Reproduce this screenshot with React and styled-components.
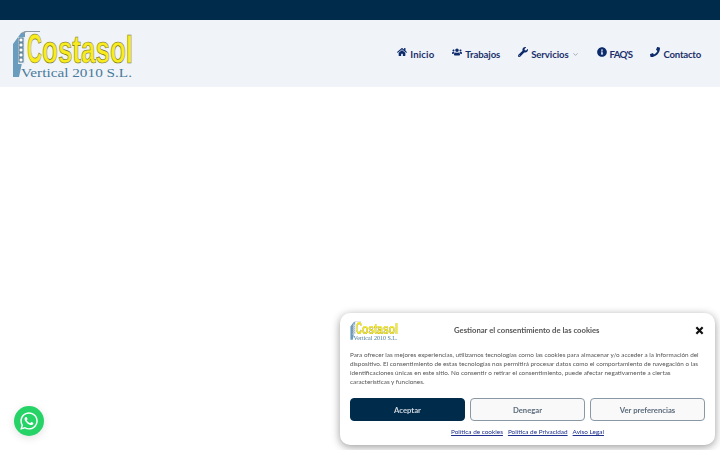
import React from "react"
import styled, { createGlobalStyle } from "styled-components"
import { FaHome, FaUsers, FaWrench, FaInfoCircle, FaPhone, FaWhatsapp } from "react-icons/fa"
import { FiChevronDown } from "react-icons/fi"

const GlobalStyle = createGlobalStyle`
  html, body {
    margin: 0;
    padding: 0;
    background: #fff;
    font-family: "Lato", "Noto Sans", sans-serif;
  }
`

const Page = styled.div`
  height: 450px;
  overflow: hidden;
`

const TopBar = styled.div`
  height: 20px;
  background-color: #002b4a;
`

const Header = styled.header`
  height: 67px;
  background-color: #f0f4f8;
  display: flex;
  align-items: center;
  justify-content: space-between;
  padding: 0 19px 0 12px;
`

const Nav = styled.nav`
  display: flex;
  align-items: center;
  gap: 18px;
`

const NavItem = styled.a`
  display: flex;
  align-items: center;
  gap: 3px;
  font-size: 9.6px;
  font-weight: 700;
  letter-spacing: ${({ $spacing }) => $spacing}px;
  color: #1b2f6b;
  padding-top: 1px;
  white-space: nowrap;

  svg.icon {
    width: 10px;
    height: 10px;
    color: #0d2b6b;
    position: relative;
    top: -2px;
  }
`

const Caret = styled(FiChevronDown)`
  width: 7px;
  height: 7px;
  color: #6f7a8e;
`

const Logo = ({ width }) => (
  <svg width={width} viewBox="0 0 121 48" style={{ display: "block" }}>
    <path d="M1 47V14L9 3H13V33H10L7 47Z" fill="#6a9cbd" />
    <path d="M9 3 13 1H28V2H14L12 4Z" fill="#8b9aa5" />
    <rect x="6" y="7" width="7" height="27" fill="#e6eef3" />
    {[8, 13, 18, 23, 28].map((y) => (
      <rect key={y} x="7" y={y} width="4" height="4" fill="#fff" stroke="#33617f" strokeWidth="0.9" />
    ))}
    <text
      x="15"
      y="33"
      fontFamily="Liberation Sans, sans-serif"
      fontWeight="700"
      fill="#f8ec1e"
      stroke="#6f6a22"
      strokeWidth="0.6"
    >
      <tspan fontSize="43" textLength="15" lengthAdjust="spacingAndGlyphs">C</tspan>
      <tspan fontSize="39" textLength="91" lengthAdjust="spacingAndGlyphs">ostasol</tspan>
    </text>
    <text
      x="9"
      y="47"
      textLength="111"
      lengthAdjust="spacingAndGlyphs"
      fontFamily="Liberation Serif, serif"
      fontSize="13.5"
      fill="#4a7a9c"
    >
      Vertical 2010 S.L.
    </text>
  </svg>
)

const Card = styled.section`
  position: fixed;
  right: 5px;
  bottom: 5px;
  width: 375px;
  height: 132px;
  box-sizing: border-box;
  background: #fff;
  border-radius: 10px;
  box-shadow: 0 2px 8px rgba(0, 0, 0, 0.4);
  padding: 7px 10px 0;
  display: flex;
  flex-direction: column;
`

const CardHead = styled.div`
  display: grid;
  grid-template-columns: 104px 1fr 24px;
  align-items: center;
  height: 22px;
`

const CardTitle = styled.div`
  font-size: 7.7px;
  font-weight: 700;
  color: #555;
  white-space: nowrap;
  margin-bottom: 3px;
`

const Close = styled.svg`
  width: 9px;
  height: 9px;
  justify-self: end;
  margin: 0 1px 2px 0;
`

const Message = styled.p`
  margin: 8px 0 0;
  font-size: 6.35px;
  line-height: 9px;
  color: #555;
  white-space: nowrap;
`

const Buttons = styled.div`
  display: grid;
  grid-template-columns: repeat(3, 115px);
  column-gap: 5px;
  margin-top: 12px;
`

const Btn = styled.button`
  height: 23px;
  padding: 0;
  border-radius: 4px;
  font-family: inherit;
  font-size: 7.7px;
  font-weight: 700;
  color: ${({ $primary }) => ($primary ? "#cfd8e0" : "#5b6b7c")};
  background: ${({ $primary }) => ($primary ? "#002b4a" : "#f9f9f9")};
  border: 1px solid ${({ $primary }) => ($primary ? "#002b4a" : "#8a98a6")};
`

const Links = styled.div`
  display: flex;
  justify-content: center;
  gap: 5px;
  margin-top: 7px;
`

const DocLink = styled.a`
  font-size: 6.4px;
  color: #1b2f8b;
  text-decoration: underline;
`

const WhatsApp = styled.a`
  position: fixed;
  left: 14px;
  bottom: 14px;
  width: 30px;
  height: 30px;
  border-radius: 50%;
  background: #25d366;
  color: #fff;
  display: flex;
  align-items: center;
  justify-content: center;
  box-shadow: 0 2px 8px rgba(0, 0, 0, 0.12);
`

const lines = [
  "Para ofrecer las mejores experiencias, utilizamos tecnologías como las cookies para almacenar y/o acceder a la información del",
  "dispositivo. El consentimiento de estas tecnologías nos permitirá procesar datos como el comportamiento de navegación o las",
  "identificaciones únicas en este sitio. No consentir o retirar el consentimiento, puede afectar negativamente a ciertas",
  "características y funciones.",
]

const App = () => (
  <Page>
    <GlobalStyle />
    <TopBar />
    <Header>
      <Logo width={121} />
      <Nav>
        <NavItem $spacing={0.15}><FaHome className="icon" /> Inicio</NavItem>
        <NavItem $spacing={-0.1}><FaUsers className="icon" /> Trabajos</NavItem>
        <NavItem $spacing={-0.1}><FaWrench className="icon" /> Servicios<Caret /></NavItem>
        <NavItem $spacing={-0.7}><FaInfoCircle className="icon" /> FAQ'S</NavItem>
        <NavItem $spacing={-0.2}><FaPhone className="icon" /> Contacto</NavItem>
      </Nav>
    </Header>
    <Card>
      <CardHead>
        <Logo width={48} />
        <CardTitle>Gestionar el consentimiento de las cookies</CardTitle>
        <Close viewBox="0 0 10 10">
          <path d="M1.5 1.5l7 7M8.5 1.5l-7 7" stroke="#111" strokeWidth="2.4" />
        </Close>
      </CardHead>
      <Message>
        {lines.map((line) => (
          <React.Fragment key={line}>{line}<br /></React.Fragment>
        ))}
      </Message>
      <Buttons>
        <Btn $primary>Aceptar</Btn>
        <Btn>Denegar</Btn>
        <Btn>Ver preferencias</Btn>
      </Buttons>
      <Links>
        <DocLink>Política de cookies</DocLink>
        <DocLink>Política de Privacidad</DocLink>
        <DocLink>Aviso Legal</DocLink>
      </Links>
    </Card>
    <WhatsApp><FaWhatsapp size={20} /></WhatsApp>
  </Page>
)

export default App
